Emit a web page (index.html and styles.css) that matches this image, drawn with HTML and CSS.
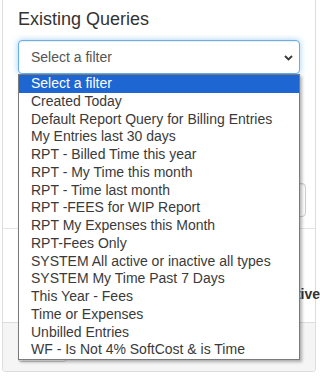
FILE: index.html
```html
<!DOCTYPE html>
<html>
<head>
<meta charset="utf-8">
<link rel="stylesheet" href="styles.css">
</head>
<body>
<div class="panel">
  <div class="panel-body">
    <h4 class="title">Existing Queries</h4>
    <div class="select-wrap">
      <div class="select focused">
        <span>Select a filter</span>
        <svg class="chev" width="9" height="6" viewBox="0 0 9 6"><path d="M1 1 L4.5 4.5 L8 1" fill="none" stroke="#3a3a3a" stroke-width="1.9"/></svg>
      </div>
      <ul class="options">
        <li class="sel">Select a filter</li>
        <li>Created Today</li>
        <li>Default Report Query for Billing Entries</li>
        <li>My Entries last 30 days</li>
        <li>RPT - Billed Time this year</li>
        <li>RPT - My Time this month</li>
        <li>RPT - Time last month</li>
        <li>RPT -FEES for WIP Report</li>
        <li>RPT My Expenses this Month</li>
        <li>RPT-Fees Only</li>
        <li>SYSTEM All active or inactive all types</li>
        <li>SYSTEM My Time Past 7 Days</li>
        <li>This Year - Fees</li>
        <li>Time or Expenses</li>
        <li>Unbilled Entries</li>
        <li>WF - Is Not 4% SoftCost &amp; is Time</li>
      </ul>
    </div>
    <div class="group">
      <div class="label"></div>
      <div class="input"></div>
    </div>
    <div class="group group2">
      <div class="label"></div>
      <div class="select wide">
        <span></span>
        <svg class="chev" width="9" height="6" viewBox="0 0 9 6"><path d="M1 1 L4.5 4.5 L8 1" fill="none" stroke="#3a3a3a" stroke-width="1.9"/></svg>
      </div>
    </div>
    <div class="rule"></div>
    <div class="status"><b>Active</b></div>
  </div>
  <div class="panel-footer">
    <button class="btn"></button>
  </div>
</div>
</body>
</html>
```
FILE: styles.css
```css
html, body {
  margin: 0;
  padding: 0;
  overflow: hidden;
  background: #fff;
}
body {
  font-family: "Liberation Sans", Arial, sans-serif;
  font-size: 14px;
  color: #333;
}
.panel {
  margin-left: 2px;
  width: 314px;
  box-sizing: border-box;
  border: 1px solid #ddd;
  border-top: none;
  border-radius: 0 0 4px 4px;
  background: #fff;
}
.panel-body {
  padding: 9px 15px 18px 15px;
}
.title {
  margin: 0 0 11px 0;
  font-size: 18px;
  font-weight: normal;
  line-height: 20px;
  color: #333;
}
.select-wrap {
  position: relative;
  z-index: 2;
}
.select {
  height: 34px;
  box-sizing: border-box;
  border: 1px solid #ccc;
  border-radius: 4px;
  padding: 0 12px;
  display: flex;
  align-items: center;
  justify-content: space-between;
  color: #555;
  background: #fff;
  box-shadow: inset 0 1px 1px rgba(0,0,0,.075);
}
.select.focused {
  border-color: #66afe9;
  box-shadow: inset 0 1px 1px rgba(0,0,0,.075), 0 0 6px rgba(102,175,233,.6);
}
.chev {
  margin-right: -6px;
  margin-top: 1px;
}
.options {
  position: absolute;
  top: 100%;
  left: 0;
  right: 0;
  margin: 0;
  padding: 0;
  list-style: none;
  background: #fff;
  border: 1px solid #7a7a7a;
  box-shadow: 2px 2px 3px rgba(0,0,0,.3);
}
.options li {
  height: 17.75px;
  line-height: 17.75px;
  padding-left: 12px;
  color: #3a3a3a;
  white-space: nowrap;
}
.options li.sel {
  background: #1e67d2;
  color: #fff;
}
.group {
  margin-top: 15px;
}
.label {
  height: 20px;
}
.input {
  height: 34px;
  box-sizing: border-box;
  border: 1px solid #ccc;
  border-radius: 4px;
}
.group2 .label {
  margin-bottom: 5px;
}
.wide {
  margin-right: -6px;
}
.rule {
  margin: 11px -15px 0 -15px;
  border-top: 1px solid #e5e5e5;
}
.status {
  margin-top: 55px;
  height: 20px;
  line-height: 20px;
  padding-left: 260px;
  white-space: nowrap;
  font-weight: bold;
}
.panel-footer {
  background: #f5f5f5;
  border-top: 1px solid #ddd;
  padding: 9px 15px;
  border-radius: 0 0 3px 3px;
}
.btn {
  display: block;
  width: 49px;
  height: 30px;
  border: 1px solid #ccc;
  border-radius: 3px;
  background: #fff;
  font-family: inherit;
  font-size: 12px;
  color: #333;
}
```
